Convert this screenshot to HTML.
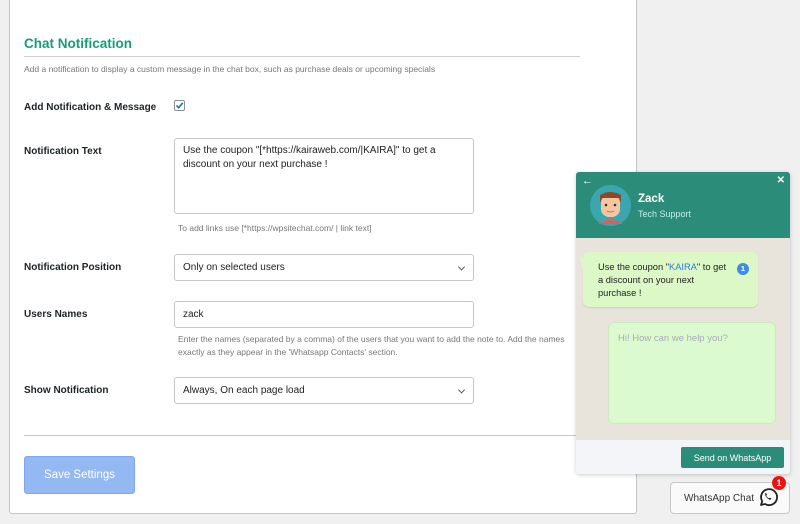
<!DOCTYPE html>
<html><head><meta charset="utf-8"><style>
*{box-sizing:border-box;margin:0;padding:0}
body{width:800px;height:524px;background:#f0f0f1;font-family:"Liberation Sans",sans-serif;position:relative;overflow:hidden;color:#1d2327}
.panel{position:absolute;left:9px;top:-2px;width:628px;height:516px;background:#fff;border:1px solid #c3c4c7;border-radius:0 0 3px 3px}
.abs{position:absolute}
h2{position:absolute;left:24px;top:36px;font-size:13.5px;color:#1a9a7c;font-weight:bold}
.hr{position:absolute;left:24px;width:556px;height:1px;background:#d0d0d0}
.desc{font-size:8.5px;color:#777}
.lbl{position:absolute;left:24px;font-size:10px;font-weight:bold;color:#1d2327}
.inp{position:absolute;left:174px;width:300px;border:1px solid #c8c8c8;border-radius:3px;background:#fff;font-size:10px;color:#222;padding:0 8px;display:flex;align-items:center}
.chev{position:absolute;right:9px;top:50%;width:5px;height:5px;border-right:1.3px solid #555;border-bottom:1.3px solid #555;transform:translateY(-70%) rotate(45deg)}
</style></head><body>
<div class="panel"></div>
<h2>Chat Notification</h2>
<div class="hr" style="top:56px"></div>
<div class="abs desc" style="left:24px;top:64px">Add a notification to display a custom message in the chat box, such as purchase deals or upcoming specials</div>
<div class="lbl" style="top:102px">Add Notification &amp; Message</div>
<div class="abs" style="left:174px;top:100px;width:11px;height:11px;border:1px solid #8c8f94;border-radius:2px;background:#fff"><svg width="9" height="9" viewBox="0 0 9 9" style="position:absolute;left:0;top:0"><path d="M1.5 4.5L3.7 6.7L7.8 1.8" stroke="#2271b1" stroke-width="1.6" fill="none"/></svg></div>
<div class="lbl" style="top:146px">Notification Text</div>
<div class="inp" style="top:138px;height:76px;align-items:flex-start;padding-top:5px;line-height:14px">Use the coupon "[*https://kairaweb.com/|KAIRA]" to get a discount on your next purchase !</div>
<div class="abs desc" style="left:178px;top:223px">To add links use [*https://wpsitechat.com/ | link text]</div>
<div class="lbl" style="top:262px">Notification Position</div>
<div class="inp" style="top:254px;height:27px">Only on selected users<span class="chev"></span></div>
<div class="lbl" style="top:309px">Users Names</div>
<div class="inp" style="top:301px;height:27px">zack</div>
<div class="abs desc" style="left:178px;top:333px;line-height:12.5px;width:400px">Enter the names (separated by a comma) of the users that you want to add the note to. Add the names exactly as they appear in the 'Whatsapp Contacts' section.</div>
<div class="lbl" style="top:385px">Show Notification</div>
<div class="inp" style="top:377px;height:27px;left:174px">Always, On each page load<span class="chev"></span></div>
<div class="hr" style="top:435px;background:#c8c8c8"></div>
<div class="abs" style="left:24px;top:456px;width:111px;height:38px;background:#93b8f2;border:1px solid #7fa8ea;border-radius:3px;color:#fff;font-size:11.5px;display:flex;align-items:center;justify-content:center">Save Settings</div>

<div class="abs" style="left:576px;top:172px;width:214px;height:302px;background:#e8e4dc;border-radius:3px;box-shadow:0 1px 4px rgba(0,0,0,.2);overflow:hidden">
 <div class="abs" style="left:0;top:0;width:214px;height:66px;background:#2b8c7a"></div>
 <div class="abs" style="left:6px;top:3px;color:#fff;font-size:11px;font-weight:bold">←</div>
 <div class="abs" style="right:5px;top:3px;color:#fff;font-size:10px;font-weight:bold">✕</div>
 <svg class="abs" style="left:14px;top:13px" width="41" height="41" viewBox="0 0 41 41"><circle cx="20.5" cy="20.5" r="20.5" fill="#3aa6b0"/><path d="M8 39q12-8 25 0" fill="#e85a4f"/><rect x="11" y="10" width="19" height="22" rx="8" fill="#f7c5a0"/><path d="M10 18V10q10-6 21 0v8l-2-5H12z" fill="#8b4a25"/><circle cx="16" cy="20" r="1.3" fill="#333"/><circle cx="25" cy="20" r="1.3" fill="#333"/><path d="M17 26q3.5 2 7 0" stroke="#c0665a" fill="none"/></svg>
 <div class="abs" style="left:62px;top:21px;color:#fff;font-size:11.5px;font-weight:bold">Zack</div>
 <div class="abs" style="left:62px;top:37px;color:#dff;font-size:9px;opacity:.85">Tech Support</div>
 <div class="abs" style="left:7px;top:80px;width:175px;height:55px;background:#dcf8c6;border-radius:6px;box-shadow:0 1px 1px rgba(0,0,0,.1)"></div>
 <div class="abs" style="left:0px;top:86px;width:0;height:0;border-top:8px solid #dcf8c6;border-left:10px solid transparent;transform:rotate(45deg)"></div>
 <div class="abs" style="left:22px;top:89px;width:132px;font-size:9.3px;line-height:13px;color:#222">Use the coupon "<span style="color:#2a7de1">KAIRA</span>" to get a discount on your next purchase !</div>
 <div class="abs" style="left:161px;top:91px;width:12px;height:12px;border-radius:50%;background:#3d8ce8;color:#fff;font-size:7.5px;font-weight:bold;text-align:center;line-height:12px">1</div>
 <div class="abs" style="left:32px;top:150px;width:168px;height:102px;background:#dcfad0;border-radius:6px;border:1px solid #cde8c0"></div>
 <div class="abs" style="left:42px;top:161px;font-size:9.5px;color:#aab">Hi! How can we help you?</div>
 <div class="abs" style="left:0;top:268px;width:214px;height:34px;background:#f3f5f8"></div>
 <div class="abs" style="left:105px;top:275px;width:103px;height:21px;background:#2b8c7a;border-radius:2px;color:#fff;font-size:9px;display:flex;align-items:center;justify-content:center">Send on WhatsApp</div>
</div>
<div class="abs" style="left:670px;top:482px;width:120px;height:32px;background:#fafafa;border:1px solid #c8c8c8;border-radius:4px;font-size:10px;color:#333;padding-left:13px;display:flex;align-items:center">WhatsApp Chat</div>
<svg class="abs" style="left:757px;top:486px" width="22" height="22" viewBox="0 0 22 22"><path d="M4 19l1.2-3.8A8 8 0 1 1 8 18z" fill="none" stroke="#222" stroke-width="1.8" stroke-linejoin="round"/><path d="M8 7.5q0 4 5 6.5l1.5-1.4-1.8-1-1 .8q-1.8-1-2.5-2.6l.8-1-1-1.8z" fill="#222"/></svg>
<div class="abs" style="left:772px;top:476px;width:14px;height:14px;border-radius:50%;background:#e11;color:#fff;font-size:9px;font-weight:bold;text-align:center;line-height:14px">1</div>
</body></html>
